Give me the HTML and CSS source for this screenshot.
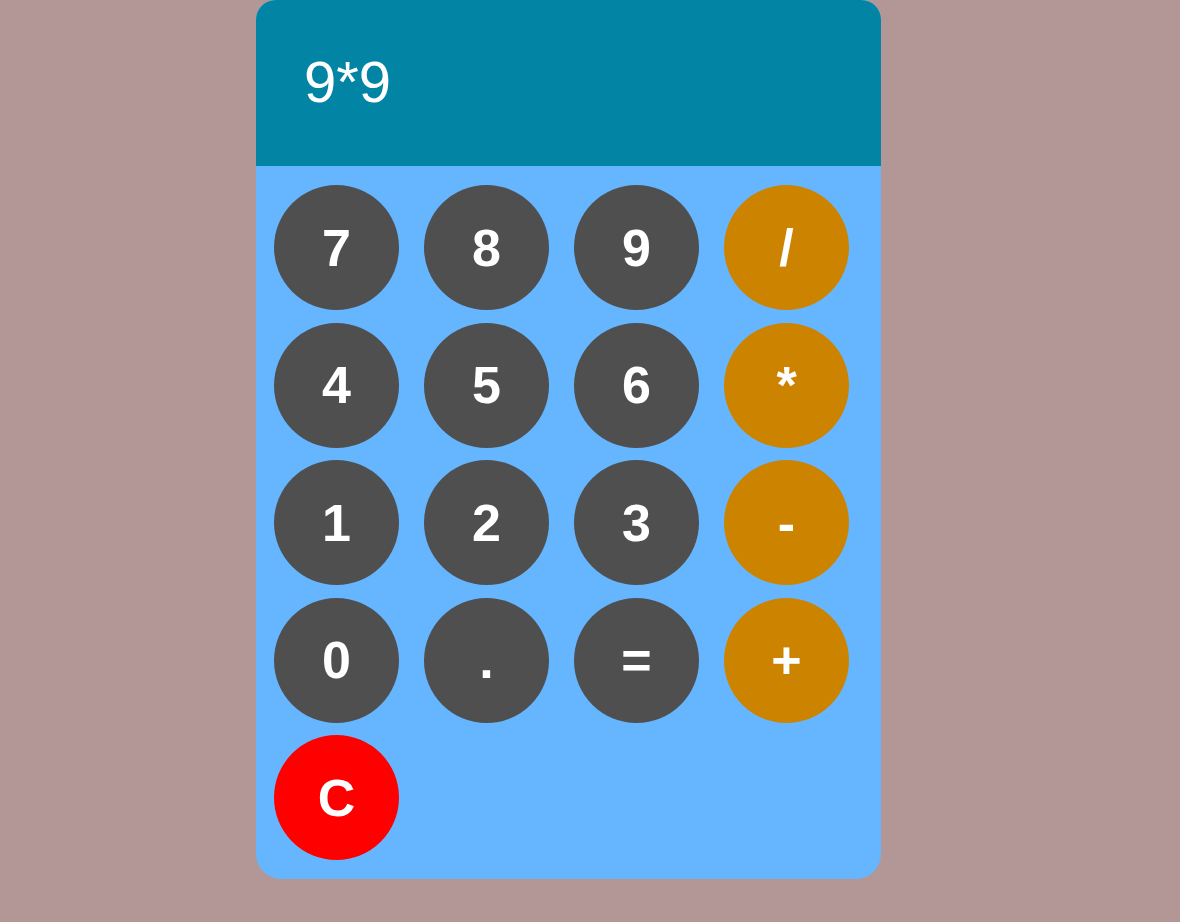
FILE: index.html
```html
<!DOCTYPE html>
<html lang="en">
<head>
<meta charset="utf-8">
<title>Calculator</title>
<link rel="stylesheet" href="styles.css">
</head>
<body>
<div class="calc">
  <div class="display">9*9</div>
  <div class="keys">
    <button class="key num">7</button>
    <button class="key num">8</button>
    <button class="key num">9</button>
    <button class="key op">/</button>
    <button class="key num">4</button>
    <button class="key num">5</button>
    <button class="key num">6</button>
    <button class="key op">*</button>
    <button class="key num">1</button>
    <button class="key num">2</button>
    <button class="key num">3</button>
    <button class="key op">-</button>
    <button class="key num">0</button>
    <button class="key num">.</button>
    <button class="key num">=</button>
    <button class="key op">+</button>
    <button class="key clear">C</button>
  </div>
</div>
</body>
</html>
```

FILE: styles.css
```css
html, body {
  margin: 0;
  padding: 0;
}
body {
  background: #b39797;
  font-family: "Liberation Sans", Arial, sans-serif;
  min-height: 922px;
}
.calc {
  width: 625px;
  margin-left: 256px;
  border-radius: 20px 20px 25px 25px;
  overflow: hidden;
  background: #66b5ff;
}
.display {
  height: 166px;
  box-sizing: border-box;
  background: #0284a4;
  color: #ffffff;
  font-size: 58px;
  display: flex;
  align-items: center;
  padding-left: 48px;
  padding-bottom: 4px;
}
.keys {
  display: grid;
  grid-template-columns: repeat(4, 125px);
  column-gap: 25px;
  row-gap: 12.5px;
  padding: 19px 32px 19px 18px;
}
.key {
  width: 125px;
  height: 125px;
  border-radius: 50%;
  border: none;
  padding: 0;
  margin: 0;
  color: #ffffff;
  font-family: "Liberation Sans", Arial, sans-serif;
  font-weight: bold;
  font-size: 52px;
  display: flex;
  align-items: center;
  justify-content: center;
}
.num { background: #4f4f4f; }
.op { background: #cc8400; }
.clear { background: #ff0000; }
```
